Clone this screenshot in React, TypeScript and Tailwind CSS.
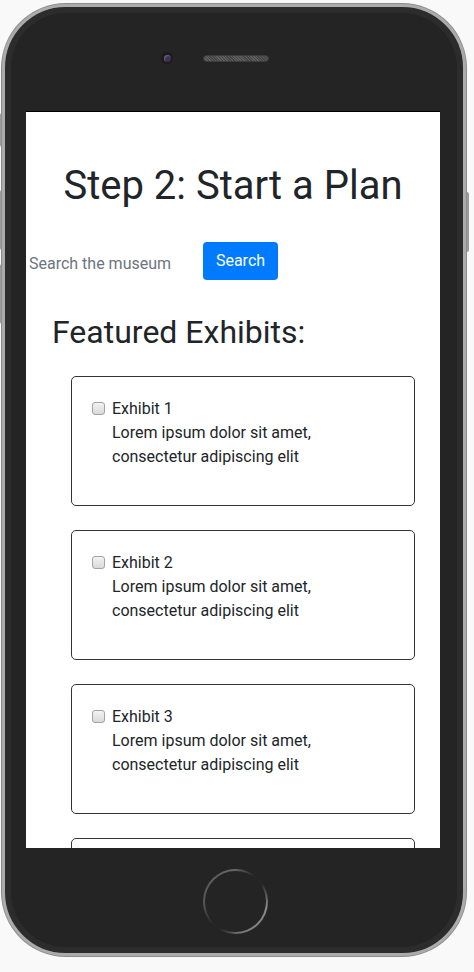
import { useState } from 'react'

const EXHIBITS = ['Exhibit 1', 'Exhibit 2', 'Exhibit 3', 'Exhibit 4']

function ExhibitCard({ name }: { name: string }) {
  const [checked, setChecked] = useState(false)
  return (
    <li className="h-[130px] shrink-0 rounded-[5px] border border-[#333] px-[20px] pt-[20px]">
      <label className="flex items-start gap-[7px] text-[16px] leading-[24px] text-[#212529]">
        <input
          type="checkbox"
          checked={checked}
          onChange={() => setChecked(!checked)}
          className="mt-[5px] h-[13px] w-[13px] shrink-0 appearance-none rounded-[3px] border border-[#a3a3a3] bg-gradient-to-b from-[#f3f3f3] to-[#d9d9d9] checked:bg-[#007bff]"
        />
        <span>
          {name}
          <br />
          Lorem ipsum dolor sit amet,
          <br />
          consectetur adipiscing elit
        </span>
      </label>
    </li>
  )
}

export default function App() {
  return (
    <div
      className="relative h-[972px] w-[474px] overflow-hidden bg-[#f9f9f9]"
      style={{ fontFamily: 'Roboto, "Liberation Sans", sans-serif' }}
    >
      {/* side buttons */}
      <div className="absolute left-0 top-[113px] h-[34px] w-[5px] rounded-l-[2px] bg-[#9c9c9c]" />
      <div className="absolute left-0 top-[190px] h-[60px] w-[5px] rounded-l-[2px] bg-[#9c9c9c]" />
      <div className="absolute left-0 top-[264px] h-[60px] w-[5px] rounded-l-[2px] bg-[#9c9c9c]" />
      <div className="absolute left-[463px] top-[192px] h-[60px] w-[6px] rounded-r-[2px] bg-[#9c9c9c]" />

      {/* phone body */}
      <div className="relative ml-[2px] mt-[4px] h-[952px] w-[464px] rounded-[64px] border-[3px] border-[#ababab] bg-[#242424] shadow-[0_0_0_1px_#8c8c8c,inset_0_0_0_6px_#2c2c2c]">
        {/* top bezel */}
        <div className="flex h-[104px] items-start gap-[30px] pl-[156px] pt-[45px]">
          <div className="flex h-[12px] w-[12px] items-center justify-center rounded-full bg-[#1b1b1b]">
            <div className="h-[7px] w-[7px] rounded-full bg-[#3b3450] shadow-[inset_1px_1px_1px_#6a5e8c]" />
          </div>
          <div className="mt-[3px] h-[7px] w-[66px] rounded-full border border-[#3c3c3c] bg-[repeating-linear-gradient(45deg,#5e5e5e_0px,#5e5e5e_1px,#444_1px,#444_2px)]" />
        </div>

        {/* screen */}
        <div className="ml-[21px] h-[737px] w-[414px] overflow-hidden border-t border-black bg-white text-[#212529]">
          <h1 className="pt-[50px] text-center text-[40px] font-normal leading-[48px]">Step 2: Start a Plan</h1>

          <form className="mt-[32px] flex items-center gap-[4px]" onSubmit={(e) => e.preventDefault()}>
            <input
              type="text"
              placeholder="Search the museum"
              className="h-[38px] w-[173px] px-[3px] pt-[5px] text-[16px] text-[#212529] outline-none placeholder:text-[#6c757d]"
            />
            <button type="submit" className="h-[38px] w-[75px] rounded-[4px] bg-[#007bff] text-[16px] text-white">
              Search
            </button>
          </form>

          <h2 className="ml-[26px] mt-[33px] text-[32px] font-normal leading-[38px]">Featured Exhibits:</h2>

          <ul className="ml-[45px] mr-[25px] mt-[25px] flex flex-col gap-[24px]">
            {EXHIBITS.map((name) => (
              <ExhibitCard key={name} name={name} />
            ))}
          </ul>
        </div>

        {/* bottom bezel */}
        <div className="flex h-[105px] justify-center pl-[2px] pt-[21px]">
          <div className="h-[65px] w-[65px] rounded-full bg-[conic-gradient(#666_0deg,#262626_35deg,#262626_55deg,#8a8a8a_100deg,#7a7a7a_170deg,#262626_210deg,#262626_225deg,#555_265deg,#666_360deg)] p-[2px]">
            <div className="h-full w-full rounded-full bg-[#242424]" />
          </div>
        </div>
      </div>
    </div>
  )
}
